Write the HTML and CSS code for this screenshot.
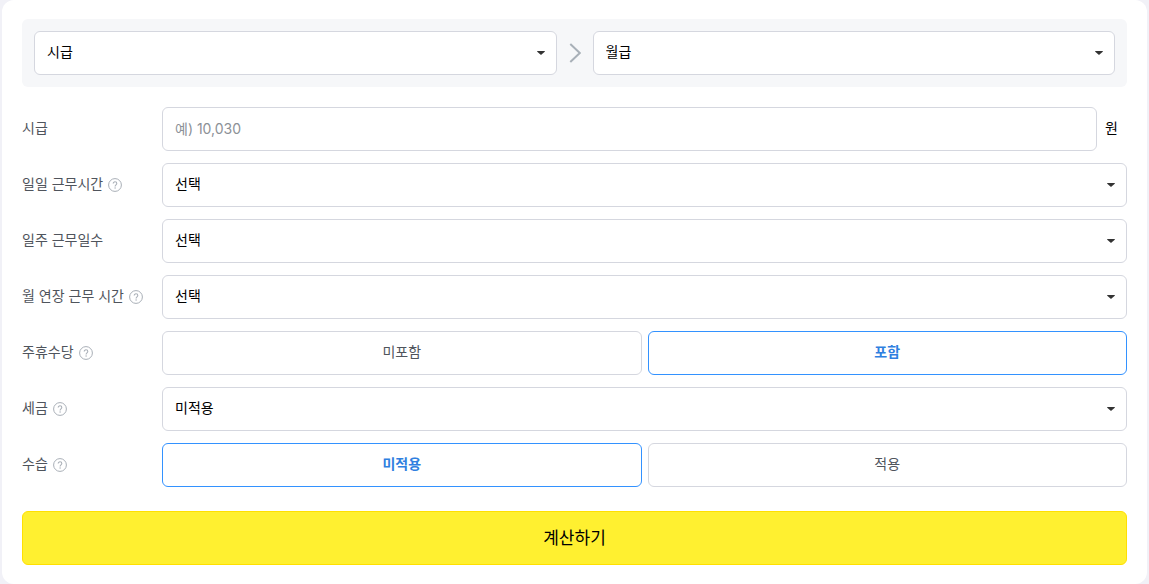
FILE: index.html
```
<!DOCTYPE html>
<html lang="ko">
<head>
  <meta charset="UTF-8">
  <meta name="viewport" content="width=device-width, initial-scale=1.0">
  <title>임금계산기</title>
  <link rel="stylesheet" href="styles.css">
</head>
<body>

  <svg class="sprite" aria-hidden="true">
    <symbol id="icon-help" viewBox="0 0 14 14">
      <circle cx="7" cy="7" r="6.4" fill="none" stroke="#a9afb7" stroke-width="1"/>
      <path d="M5.2 5.6C5.2 4.5 6 3.8 7 3.8s1.8.7 1.8 1.7c0 1.3-1.7 1.4-1.7 2.9" fill="none" stroke="#a9afb7" stroke-width="1.1"/>
      <circle cx="7.1" cy="10" r=".7" fill="#a9afb7"/>
    </symbol>
  </svg>

  <form class="calculator" id="wage-form">
    <div class="convert-bar">
      <select aria-label="변환 전 급여">
        <option>시급</option>
        <option>일급</option>
        <option>주급</option>
        <option>월급</option>
        <option>연봉</option>
      </select>
      <svg class="arrow" viewBox="0 0 12 20" aria-hidden="true">
        <path d="M1.3 1l9.5 9-9.5 9" fill="none" stroke="#a8b0b8" stroke-width="2"/>
      </svg>
      <select aria-label="변환 후 급여">
        <option>월급</option>
        <option>시급</option>
        <option>일급</option>
        <option>주급</option>
        <option>연봉</option>
      </select>
    </div>

    <div class="rows">
      <div class="row">
        <div class="title"><label for="wage">시급</label></div>
        <div class="field">
          <input type="text" id="wage" placeholder="예) 10,030" inputmode="numeric">
          <span class="unit">원</span>
        </div>
      </div>

      <div class="row">
        <div class="title">
          <label for="day-hours">일일 근무시간</label>
          <button type="button" class="help" aria-label="일일 근무시간 도움말"><svg><use href="#icon-help"/></svg></button>
        </div>
        <div class="field">
          <select id="day-hours"><option>선택</option></select>
        </div>
      </div>

      <div class="row">
        <div class="title"><label for="week-days">일주 근무일수</label></div>
        <div class="field">
          <select id="week-days"><option>선택</option></select>
        </div>
      </div>

      <div class="row">
        <div class="title">
          <label for="overtime">월 연장 근무 시간</label>
          <button type="button" class="help" aria-label="월 연장 근무 시간 도움말"><svg><use href="#icon-help"/></svg></button>
        </div>
        <div class="field">
          <select id="overtime"><option>선택</option></select>
        </div>
      </div>

      <div class="row">
        <div class="title">
          <span id="holiday-label">주휴수당</span>
          <button type="button" class="help" aria-label="주휴수당 도움말"><svg><use href="#icon-help"/></svg></button>
        </div>
        <div class="field" role="group" aria-labelledby="holiday-label">
          <button type="button" class="choice" aria-pressed="false">미포함</button>
          <button type="button" class="choice selected" aria-pressed="true">포함</button>
        </div>
      </div>

      <div class="row">
        <div class="title">
          <label for="tax">세금</label>
          <button type="button" class="help" aria-label="세금 도움말"><svg><use href="#icon-help"/></svg></button>
        </div>
        <div class="field">
          <select id="tax">
            <option>미적용</option>
            <option>적용</option>
          </select>
        </div>
      </div>

      <div class="row">
        <div class="title">
          <span id="probation-label">수습</span>
          <button type="button" class="help" aria-label="수습 도움말"><svg><use href="#icon-help"/></svg></button>
        </div>
        <div class="field" role="group" aria-labelledby="probation-label">
          <button type="button" class="choice selected" aria-pressed="true">미적용</button>
          <button type="button" class="choice" aria-pressed="false">적용</button>
        </div>
      </div>
    </div>

    <button type="submit" class="submit">계산하기</button>
  </form>

  <script>
    // Toggle between the two buttons of a group
    document.querySelectorAll('.choice').forEach(button => {
      button.addEventListener('click', function () {
        this.parentElement.querySelectorAll('.choice').forEach(item => {
          item.classList.toggle('selected', item === this);
          item.setAttribute('aria-pressed', item === this);
        });
      });
    });

    document.getElementById('wage-form').addEventListener('submit', e => e.preventDefault());
  </script>
</body>
</html>
```
FILE: styles.css
```
* {
  box-sizing: border-box;
}

body {
  margin: 0;
  padding: 0 2px;
  background-color: #f1f1f7;
}

body, input, select, button {
  font-family: Inter, "Noto Sans CJK KR", sans-serif;
  font-size: 14px;
  line-height: 20px;
}

.sprite {
  display: none;
}

.calculator {
  padding: 19px 20px;
  border-radius: 12px;
  background-color: #fff;
}

.convert-bar {
  display: flex;
  align-items: center;
  gap: 12px;
  padding: 12px;
  border-radius: 6px;
  background-color: #f6f7f9;
}

.arrow {
  flex: none;
  width: 12px;
  height: 20px;
}

select, input, .choice {
  flex: 1;
  min-width: 0;
  height: 44px;
  padding: 0 12px 2px;
  border: 1px solid #d5d7df;
  border-radius: 6px;
  background-color: #fff;
  color: #000;
}

select {
  appearance: none;
  background-image: url("data:image/svg+xml,%3Csvg xmlns='http://www.w3.org/2000/svg' viewBox='0 0 8 4'%3E%3Cpath d='M.5 0h7q.8.1.2.8L4.6 3.6q-.6.5-1.2 0L.3.8Q-.3.1.5 0z' fill='%23333'/%3E%3C/svg%3E");
  background-repeat: no-repeat;
  background-position: right 11px center;
  background-size: 8px 4px;
  cursor: pointer;
}

input::placeholder {
  color: #8c9197;
  opacity: 1;
}

.rows {
  display: grid;
  gap: 12px;
  margin: 20px 0 24px;
}

.row {
  display: grid;
  grid-template-columns: 140px 1fr;
  align-items: center;
}

.title {
  display: flex;
  align-items: center;
  gap: 5px;
  color: #4f545c;
}

.title label, .title span, .unit {
  padding-bottom: 2px;
}

.help {
  display: flex;
  padding: 0;
  border: none;
  background: none;
  cursor: pointer;
}

.help svg {
  width: 14px;
  height: 14px;
}

.field {
  display: flex;
  align-items: center;
  gap: 6px;
}

.unit {
  padding-left: 2px;
  padding-right: 9px;
}

.choice {
  color: #4f545c;
  cursor: pointer;
}

.choice.selected {
  border-color: #3392ff;
  color: #2f80e0;
  font-weight: bold;
}

.submit {
  display: block;
  width: 100%;
  height: 54px;
  border: 1px solid #ffe000;
  border-radius: 6px;
  background-color: #fff030;
  color: #000;
  font-size: 17px;
  cursor: pointer;
}
```
